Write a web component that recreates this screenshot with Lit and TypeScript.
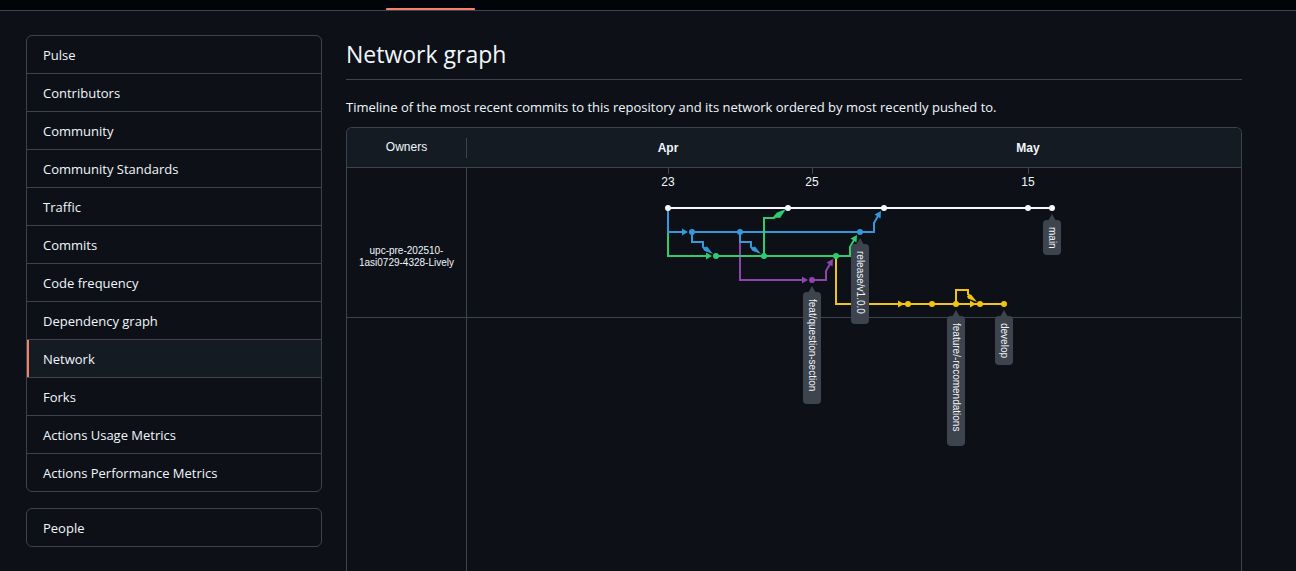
import { LitElement, html, svg, css } from "lit";
import { customElement } from "lit/decorators.js";
import { classMap } from "lit/directives/class-map.js";

const INSIGHTS = [
  "Pulse",
  "Contributors",
  "Community",
  "Community Standards",
  "Traffic",
  "Commits",
  "Code frequency",
  "Dependency graph",
  "Network",
  "Forks",
  "Actions Usage Metrics",
  "Actions Performance Metrics",
];

const WHITE = "#f8f8ff";
const BLUE = "#3498db";
const GREEN = "#2ecc71";
const PURPLE = "#8e44ad";
const YELLOW = "#f1c40f";

interface Tag {
  x: number;
  y: number;
  height: number;
  name: string;
}

// Coordinates are relative to the plot, one commit column every 24 units.
const DAYS = [
  { x: 201, label: "23" },
  { x: 345, label: "25" },
  { x: 561, label: "15" },
];

const MONTHS = [
  { x: 201, label: "Apr" },
  { x: 561, label: "May" },
];

const LINES = [
  { color: PURPLE, d: "M273 64V112H336" },
  { color: GREEN, d: "M201 40V88H239" },
  { color: BLUE, d: "M201 40V64H215" },
  { color: YELLOW, d: "M369 88V136H431" },
  { color: WHITE, d: "M201 40H585" },
  { color: BLUE, d: "M225 64H407V55L411 48" },
  { color: BLUE, d: "M225 64V74H236V79L240 83" },
  { color: BLUE, d: "M273 64V74H284V79L288 83" },
  { color: GREEN, d: "M249 88H383V79L387 72" },
  { color: GREEN, d: "M297 88V50H307L312 47" },
  { color: PURPLE, d: "M345 112H359V103L363 96" },
  { color: YELLOW, d: "M431 136H537" },
  { color: YELLOW, d: "M489 136V122H501V126L505 130" },
];

const ARROWS = [
  { color: BLUE, d: "M215 60.5L221 64L215 67.5Z" },
  { color: GREEN, d: "M239 84.5L245 88L239 91.5Z" },
  { color: PURPLE, d: "M335 108.5L341 112L335 115.5Z" },
  { color: YELLOW, d: "M431 132.5L437 136L431 139.5Z" },
  { color: YELLOW, d: "M503 132.5L509 136L503 139.5Z" },
  { color: BLUE, d: "M236 80L240 78.5L246 86L237 82.5Z" },
  { color: BLUE, d: "M284 80L288 78.5L294 86L285 82.5Z" },
  { color: YELLOW, d: "M500 128L504 126.5L510 134L501 130.5Z" },
  { color: GREEN, d: "M306 49L310 44.5L319 41L313 50Z" },
  { color: BLUE, d: "M407.5 46.5L414 43L413.5 50.5Z" },
  { color: GREEN, d: "M383.5 70.5L390 67L389.5 74.5Z" },
  { color: PURPLE, d: "M359.5 94.5L366 91L365.5 98.5Z" },
];

const COMMITS = [
  { color: WHITE, y: 40, xs: [201, 321, 417, 561, 585] },
  { color: BLUE, y: 64, xs: [225, 273, 393] },
  { color: GREEN, y: 88, xs: [249, 297, 369] },
  { color: PURPLE, y: 112, xs: [345] },
  { color: YELLOW, y: 136, xs: [441, 465, 489, 513, 537] },
];

const TAGS: Tag[] = [
  { x: 585, y: 40, height: 35, name: "main" },
  { x: 393, y: 64, height: 80, name: "release/v1.0.0" },
  { x: 345, y: 112, height: 112, name: "feat/question-section" },
  { x: 489, y: 136, height: 130, name: "feature/-recomendations" },
  { x: 537, y: 136, height: 49, name: "develop" },
];

@customElement("insights-menu")
class InsightsMenu extends LitElement {
  static styles = css`
    :host {
      display: flex;
      flex-direction: column;
      gap: 16px;
    }
    .group {
      border: 1px solid #3d444d;
      border-radius: 6px;
      overflow: hidden;
    }
    .item {
      display: block;
      padding: 9px 16px 7px;
      line-height: 21px;
      color: #f0f6fc;
      text-decoration: none;
    }
    .item + .item {
      border-top: 1px solid #3d444d;
    }
    .selected {
      background: #151b23;
      box-shadow: inset 2px 0 #f78166;
    }
  `;

  render() {
    return html`
      <nav class="group" aria-label="Insights">
        ${INSIGHTS.map(
          (name) => html`<a
            href="#"
            class=${classMap({ item: true, selected: name === "Network" })}
            >${name}</a
          >`
        )}
      </nav>
      <nav class="group" aria-label="Organization">
        <a href="#" class="item">People</a>
      </nav>
    `;
  }
}

@customElement("network-graph")
class NetworkGraph extends LitElement {
  static styles = css`
    :host {
      display: flex;
      flex-direction: column;
      border: 1px solid #3d444d;
      border-bottom: 0;
      border-radius: 6px 6px 0 0;
      overflow: hidden;
      font: 12px/18px "Liberation Sans", Arial, sans-serif;
      color: #f0f6fc;
    }
    .head,
    .body {
      display: grid;
      grid-template-columns: 120px minmax(0, 1fr);
    }
    .head {
      background: #151b23;
      border-bottom: 1px solid #3d444d;
      align-items: center;
    }
    .owners {
      text-align: center;
      line-height: 18px;
      padding-bottom: 2px;
      border-right: 1px solid #3d444d;
    }
    .body {
      flex: 1;
    }
    .column {
      border-right: 1px solid #3d444d;
    }
    .owner {
      display: flex;
      align-items: center;
      justify-content: center;
      height: 150px;
      padding-top: 28px;
      box-sizing: border-box;
      font-size: 10px;
      line-height: 12px;
      text-align: center;
      border-bottom: 1px solid #3d444d;
    }
    .plot {
      background: linear-gradient(#3d444d, #3d444d) 0 149px / 100% 1px no-repeat;
    }
    .months,
    .graph {
      display: block;
      width: 100%;
      overflow: visible;
    }
    .months {
      height: 39px;
    }
    .graph {
      height: 300px;
    }
    text {
      fill: #f0f6fc;
      text-anchor: middle;
    }
    .month {
      font-weight: 700;
    }
    .line {
      fill: none;
      stroke-width: 2;
    }
    .tick {
      stroke: #3d444d;
    }
    .tag {
      fill: #3d444d;
    }
    .name {
      font-size: 10px;
      text-anchor: start;
    }
  `;

  private tag(t: Tag) {
    return svg`
      <g transform="translate(${t.x} ${t.y})">
        <path class="tag" d="M0 6L4 13H-4Z" />
        <rect class="tag" x="-9" y="12" width="18" height=${t.height} rx="4" />
        <text class="name" transform="translate(-3 19) rotate(90)">${t.name}</text>
      </g>
    `;
  }

  render() {
    return html`
      <div class="head">
        <div class="owners">Owners</div>
        <svg class="months">
          ${MONTHS.map((m) => svg`<text class="month" x=${m.x} y="24">${m.label}</text>`)}
        </svg>
      </div>
      <div class="body">
        <div class="column">
          <div class="owner">upc-pre-202510-<br />1asi0729-4328-Lively</div>
        </div>
        <div class="plot">
          <svg class="graph" role="img" aria-label="Network graph">
            ${DAYS.map(
              (d) => svg`
                <path class="tick" d="M${d.x + 0.5} 0V6" />
                <text x=${d.x} y="18">${d.label}</text>
              `
            )}
            ${LINES.map((l) => svg`<path class="line" stroke=${l.color} d=${l.d} />`)}
            ${ARROWS.map((a) => svg`<path fill=${a.color} d=${a.d} />`)}
            ${COMMITS.map((row) =>
              row.xs.map((x) => svg`<circle cx=${x} cy=${row.y} r="3" fill=${row.color} />`)
            )}
            ${TAGS.map((t) => this.tag(t))}
          </svg>
        </div>
      </div>
    `;
  }
}

@customElement("app-root")
class AppRoot extends LitElement {
  static styles = css`
    :host {
      display: flex;
      flex-direction: column;
      height: 100vh;
      overflow: hidden;
      background: #0d1117;
      color: #f0f6fc;
      font: 13px/21px "Open Sans", "Noto Sans", sans-serif;
    }
    .tabs {
      display: flex;
      flex: none;
      height: 10px;
      padding-left: 386px;
      background: #010409;
      border-bottom: 1px solid #3d444d;
      align-items: flex-end;
    }
    .current {
      width: 89px;
      height: 2px;
      background: #f78166;
      border-radius: 1px 1px 0 0;
    }
    .layout {
      flex: 1;
      min-height: 0;
      display: grid;
      grid-template-columns: 296px minmax(0, 1fr);
      gap: 24px;
      padding: 24px 54px 0 26px;
    }
    .main {
      display: flex;
      flex-direction: column;
      min-height: 0;
    }
    h1 {
      margin: 0 0 17px;
      padding: 2px 0 8px;
      border-bottom: 1px solid #3d444d;
      font-size: 23px;
      line-height: 34px;
      font-weight: 400;
    }
    p {
      margin: 0 0 9px;
    }
    network-graph {
      flex: 1;
      min-height: 0;
    }
  `;

  render() {
    return html`
      <div class="tabs"><div class="current"></div></div>
      <div class="layout">
        <insights-menu></insights-menu>
        <main class="main">
          <h1>Network graph</h1>
          <p>
            Timeline of the most recent commits to this repository and its network
            ordered by most recently pushed to.
          </p>
          <network-graph></network-graph>
        </main>
      </div>
    `;
  }
}
